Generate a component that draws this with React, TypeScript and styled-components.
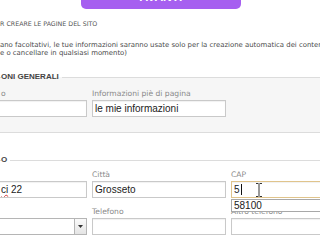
import React from 'react';
import styled, { createGlobalStyle } from 'styled-components';

const GlobalStyle = createGlobalStyle`
  html, body {
    margin: 0;
    padding: 0;
    background: #ffffff;
    overflow: hidden;
  }
  body {
    width: 320px;
    height: 240px;
    font-family: "DejaVu Sans", Verdana, sans-serif;
  }
`;

const Page = styled.div`
  width: 320px;
  height: 240px;
  overflow: hidden;
`;

const NextButton = styled.div`
  margin: -21px 0 0 81px;
  width: 160px;
  height: 30px;
  box-sizing: border-box;
  border-radius: 0 0 5px 5px;
  background: #a65ff0;
  display: flex;
  align-items: flex-end;
  justify-content: center;
  padding-bottom: 6px;
  color: #ffffff;
  font-family: "Liberation Sans", Arial, sans-serif;
  font-weight: bold;
  font-size: 12px;
  line-height: 1;
`;

const Heading = styled.div`
  margin-top: 10px;
  font-size: 6.3px;
  line-height: 10px;
  color: #555555;
  white-space: nowrap;
`;

const Intro = styled.p`
  margin: 12px 0 0;
  font-size: 6.9px;
  line-height: 8px;
  color: #4a4a4a;
  white-space: nowrap;
`;

const Fieldset = styled.fieldset<{ $shade?: boolean; $top: number }>`
  display: block;
  margin: ${(p) => p.$top}px 0 0 -12px;
  padding: 0 0 15px 12px;
  border: 1px solid #dcdcdc;
  border-right: none;
  background: ${(p) => (p.$shade ? '#f6f6f6' : '#ffffff')};
  min-width: 0;
`;

const Legend = styled.legend`
  padding: 0 3px 0 0;
  font-family: "Liberation Sans", Arial, sans-serif;
  font-weight: bold;
  font-size: 8px;
  line-height: 10px;
  color: #444444;
`;

const Grid = styled.div<{ $pad: number }>`
  display: grid;
  grid-template-columns: 86px 134px 140px;
  column-gap: 5px;
  row-gap: 9px;
  padding-top: ${(p) => p.$pad}px;
`;

const Field = styled.div`
  position: relative;
  display: flex;
  flex-direction: column;
`;

const Label = styled.label`
  height: 9px;
  margin-bottom: 2px;
  font-size: 7.6px;
  line-height: 9px;
  color: #8a8a8a;
  white-space: nowrap;
`;

const Input = styled.div<{ $first?: boolean; $focus?: boolean }>`
  height: 17px;
  box-sizing: border-box;
  margin-left: ${(p) => (p.$first ? '-10px' : '0')};
  border: 1px solid ${(p) => (p.$focus ? '#e0c48c' : '#c9c9c9')};
  background: #ffffff;
  box-shadow: inset 0 1px 1px rgba(0, 0, 0, 0.06);
  padding: 0 0 0 ${(p) => (p.$first ? '9px' : '2px')};
  display: flex;
  align-items: center;
  font-family: "Liberation Sans", Arial, sans-serif;
  font-size: 10px;
  color: #222222;
  white-space: nowrap;
  overflow: hidden;
`;

const Misspelt = styled.span`
  text-decoration: underline wavy #d23a3a;
  text-decoration-thickness: 1px;
  text-underline-offset: 1px;
`;

const Caret = styled.span`
  display: inline-block;
  width: 1px;
  height: 11px;
  margin-left: 1px;
  background: #111111;
`;

const IBeam = styled.svg`
  margin-left: 13px;
  flex-shrink: 0;
`;

const SelectBox = styled.div`
  height: 17px;
  box-sizing: border-box;
  margin-left: -10px;
  border: 1px solid #b5b5b5;
  background: #ffffff;
  display: flex;
  justify-content: flex-end;
`;

const ArrowButton = styled.div`
  width: 11px;
  border-left: 1px solid #b5b5b5;
  background: linear-gradient(#fafafa, #e4e4e4);
  display: flex;
  align-items: center;
  justify-content: center;
`;

const Suggestions = styled.div`
  position: absolute;
  z-index: 2;
  top: 100%;
  left: 0;
  width: 110px;
  height: 13px;
  box-sizing: border-box;
  margin-top: 1px;
  border: 1px solid #a8a8a8;
  background: #ffffff;
  padding-left: 2px;
  font-family: "Liberation Sans", Arial, sans-serif;
  font-size: 10px;
  line-height: 11px;
  color: #1a1a1a;
`;

const BottomBar = styled.div`
  margin-top: 1px;
  height: 2px;
  background: #6c6c6c;
`;

const App: React.FC = () => {
  return (
    <>
      <GlobalStyle />
      <Page>
        <NextButton>AVANTI</NextButton>
        <Heading>R CREARE LE PAGINE DEL SITO</Heading>
        <Intro>
          ano facoltativi, le tue informazioni saranno usate solo per la creazione automatica dei contenuti
          <br />
          e o cancellare in qualsiasi momento)
        </Intro>

        <Fieldset $shade $top={15}>
          <Legend>ONI GENERALI</Legend>
          <Grid $pad={7}>
            <Field>
              <Label>o</Label>
              <Input $first />
            </Field>
            <Field>
              <Label>Informazioni piè di pagina</Label>
              <Input>le mie informazioni</Input>
            </Field>
          </Grid>
        </Fieldset>

        <Fieldset $top={22}>
          <Legend>O</Legend>
          <Grid $pad={5}>
            <Field>
              <Label />
              <Input $first>
                <span>
                  <Misspelt>ci</Misspelt> 22
                </span>
              </Input>
            </Field>
            <Field>
              <Label>Città</Label>
              <Input>Grosseto</Input>
            </Field>
            <Field>
              <Label>CAP</Label>
              <Input $focus>
                5<Caret />
                <IBeam width="8" height="14" viewBox="0 0 8 14">
                  <path d="M1 0.5h2.5M4.5 0.5h2.5M4 1v12M1 13.5h2.5M4.5 13.5h2.5" stroke="#333" strokeWidth="1" fill="none" />
                </IBeam>
              </Input>
              <Suggestions>58100</Suggestions>
            </Field>

            <Field>
              <Label />
              <SelectBox>
                <ArrowButton>
                  <svg width="5" height="3" viewBox="0 0 5 3">
                    <path d="M0 0h5L2.5 3z" fill="#333" />
                  </svg>
                </ArrowButton>
              </SelectBox>
            </Field>
            <Field>
              <Label>Telefono</Label>
              <Input />
            </Field>
            <Field>
              <Label>Altro telefono</Label>
              <Input />
            </Field>
          </Grid>
        </Fieldset>
        <BottomBar />
      </Page>
    </>
  );
};

export default App;
